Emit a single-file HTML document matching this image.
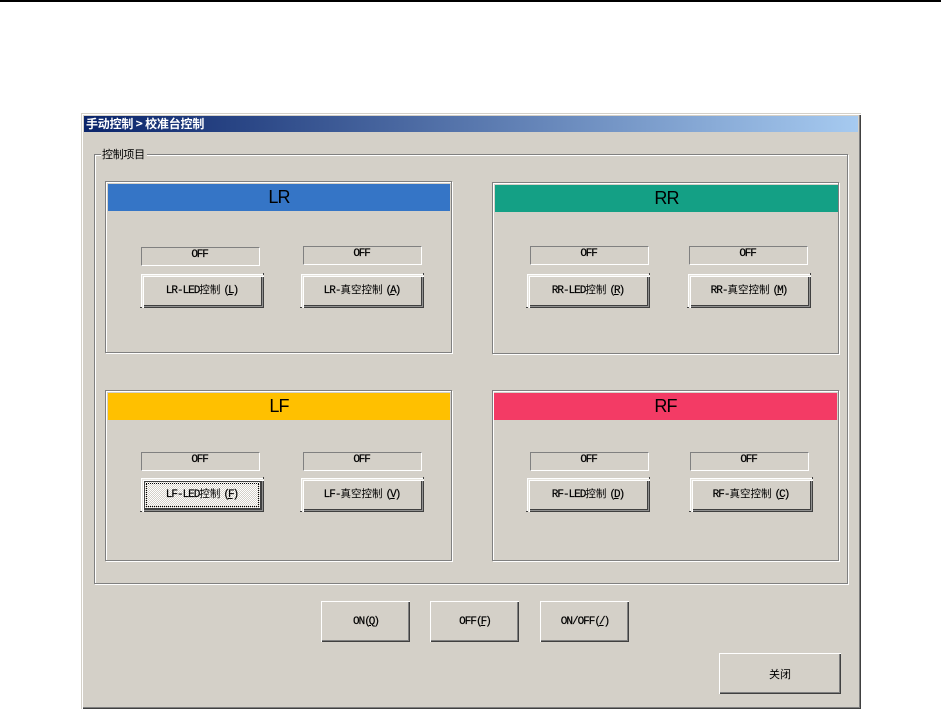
<!DOCTYPE html>
<html>
<head>
<meta charset="utf-8">
<style>
html,body{margin:0;padding:0;width:941px;height:709px;overflow:hidden;background:#fff}
div,span{box-sizing:border-box}
.a{position:absolute}
.win{position:absolute;left:81px;top:113px;width:780px;height:596px;background:#d4d0c8;box-shadow:inset 1px 1px 0 #d4d0c8,inset 2px 2px 0 #fff,inset -1px -1px 0 #404040,inset -2px -2px 0 #808080}
.title{position:absolute;left:84px;top:116px;width:774px;height:16px;background:linear-gradient(90deg,#0a246a,#a6caf0);color:#fff;font:bold 12px/16px "WenQuanYi Zen Hei","Noto Sans CJK SC",sans-serif;padding-left:2px;white-space:pre;overflow:hidden;letter-spacing:-.2px}
.etch{position:absolute;border:1px solid #808080;box-shadow:1px 1px 0 #fff,inset 1px 1px 0 #fff}
.legend{position:absolute;left:101px;top:147px;height:14px;padding:0 2px 0 1px;background:#d4d0c8;font:11px/14px "WenQuanYi Zen Hei","Noto Sans CJK SC",sans-serif;color:#000;letter-spacing:-.3px}
.hd{position:absolute;display:flex;align-items:center;justify-content:center;font:18px "Liberation Sans",sans-serif;color:#000;letter-spacing:-.9px}
.st{position:absolute;width:119px;height:19px;padding-right:2px;border-top:1px solid #808080;border-left:1px solid #808080;border-right:1px solid #fff;border-bottom:1px solid #fff;text-align:center;font:11px/14px "Liberation Mono",monospace;letter-spacing:-1.2px;color:#000;-webkit-text-stroke:.25px #000}
.bt{position:absolute;display:flex;align-items:center;justify-content:center;background:#d4d0c8;color:#000;font:11px "Liberation Mono","WenQuanYi Zen Hei","Noto Sans CJK SC",monospace;letter-spacing:-1px;white-space:pre;-webkit-text-stroke:.2px #000}
.thick{width:123px;height:34px;padding-bottom:3px;padding-right:2px;box-shadow:inset 1px 1px 0 #fff,inset 2px 2px 0 #e8e6e0,inset 3px 3px 0 #fff,inset -1px -1px 0 #404040,inset -2px -2px 0 #909090,inset -3px -3px 0 #404040}
.thick:before{content:"";position:absolute;left:-1px;bottom:0;width:2px;height:1px;background:#404040}
.thick:after{content:"";position:absolute;right:0;top:-1px;width:1px;height:2px;background:#404040}
.thin{box-shadow:inset 1px 1px 0 #fff,inset -1px -1px 0 #404040,inset -2px -2px 0 #808080}
.cj{font-size:10.5px;letter-spacing:0;-webkit-text-stroke:0;font-family:"WenQuanYi Zen Hei","Noto Sans CJK SC",sans-serif}
.m{letter-spacing:-2px;margin-left:3px}
.n{margin-left:0}
u{text-decoration:underline}
.foc{position:absolute;left:3px;top:3px;right:3px;bottom:3px;border:1px solid #404040;background-color:#d4d0c8;background-image:conic-gradient(#fff 25%,#d4d0c8 0 50%,#fff 0 75%,#d4d0c8 0);background-size:2px 2px}
.dot{position:absolute;left:1px;top:1px;right:1px;bottom:1px;border:1px dotted #000}
.tx{position:relative}
</style>
</head>
<body>
<div class="a" style="left:0;top:0;width:941px;height:2px;background:#000"></div>
<div class="win"></div>
<div class="title">手动控制 &gt; 校准台控制</div>

<div class="etch" style="left:94px;top:154px;width:754px;height:430px"></div>
<div class="legend">控制项目</div>

<!-- LR -->
<div class="etch" style="left:105px;top:181px;width:347px;height:172px"></div>
<div class="hd" style="left:108px;top:184px;width:342px;height:27px;background:#3575c6">LR</div>
<div class="st" style="left:141px;top:247px">OFF</div>
<div class="st" style="left:303px;top:246px">OFF</div>
<div class="bt thick" style="left:141px;top:274px"><span class="tx">LR-LED<span class="cj">控制</span><span class="m">(<u>L</u>)</span></span></div>
<div class="bt thick" style="left:301px;top:274px"><span class="tx">LR-<span class="cj">真空控制</span><span class="m">(<u>A</u>)</span></span></div>

<!-- RR -->
<div class="etch" style="left:492px;top:182px;width:347px;height:172px"></div>
<div class="hd" style="left:495px;top:185px;width:343px;height:27px;background:#14a085">RR</div>
<div class="st" style="left:530px;top:246px">OFF</div>
<div class="st" style="left:689px;top:246px">OFF</div>
<div class="bt thick" style="left:527px;top:274px"><span class="tx">RR-LED<span class="cj">控制</span><span class="m">(<u>R</u>)</span></span></div>
<div class="bt thick" style="left:688px;top:274px"><span class="tx">RR-<span class="cj">真空控制</span><span class="m">(<u>M</u>)</span></span></div>

<!-- LF -->
<div class="etch" style="left:105px;top:390px;width:347px;height:171px"></div>
<div class="hd" style="left:108px;top:393px;width:342px;height:27px;background:#ffc000">LF</div>
<div class="st" style="left:141px;top:452px">OFF</div>
<div class="st" style="left:303px;top:452px">OFF</div>
<div class="bt thick" style="left:141px;top:478px"><div class="foc"><div class="dot"></div></div><span class="tx">LF-LED<span class="cj">控制</span><span class="m">(<u>F</u>)</span></span></div>
<div class="bt thick" style="left:301px;top:478px"><span class="tx">LF-<span class="cj">真空控制</span><span class="m">(<u>V</u>)</span></span></div>

<!-- RF -->
<div class="etch" style="left:492px;top:390px;width:347px;height:171px"></div>
<div class="hd" style="left:494px;top:393px;width:343px;height:27px;background:#f33b65">RF</div>
<div class="st" style="left:530px;top:452px">OFF</div>
<div class="st" style="left:690px;top:452px">OFF</div>
<div class="bt thick" style="left:527px;top:478px"><span class="tx">RF-LED<span class="cj">控制</span><span class="m">(<u>D</u>)</span></span></div>
<div class="bt thick" style="left:690px;top:478px"><span class="tx">RF-<span class="cj">真空控制</span><span class="m">(<u>C</u>)</span></span></div>

<!-- bottom -->
<div class="bt thin" style="left:321px;top:601px;width:89px;height:41px"><span>ON<span class="m n">(<u>Q</u>)</span></span></div>
<div class="bt thin" style="left:430px;top:601px;width:89px;height:41px"><span>OFF<span class="m n">(<u>F</u>)</span></span></div>
<div class="bt thin" style="left:540px;top:601px;width:89px;height:41px"><span>ON/OFF<span class="m n">(<u>/</u>)</span></span></div>
<div class="bt thin" style="left:719px;top:653px;width:122px;height:41px"><span class="cj" style="font-size:11px">关闭</span></div>
</body>
</html>
